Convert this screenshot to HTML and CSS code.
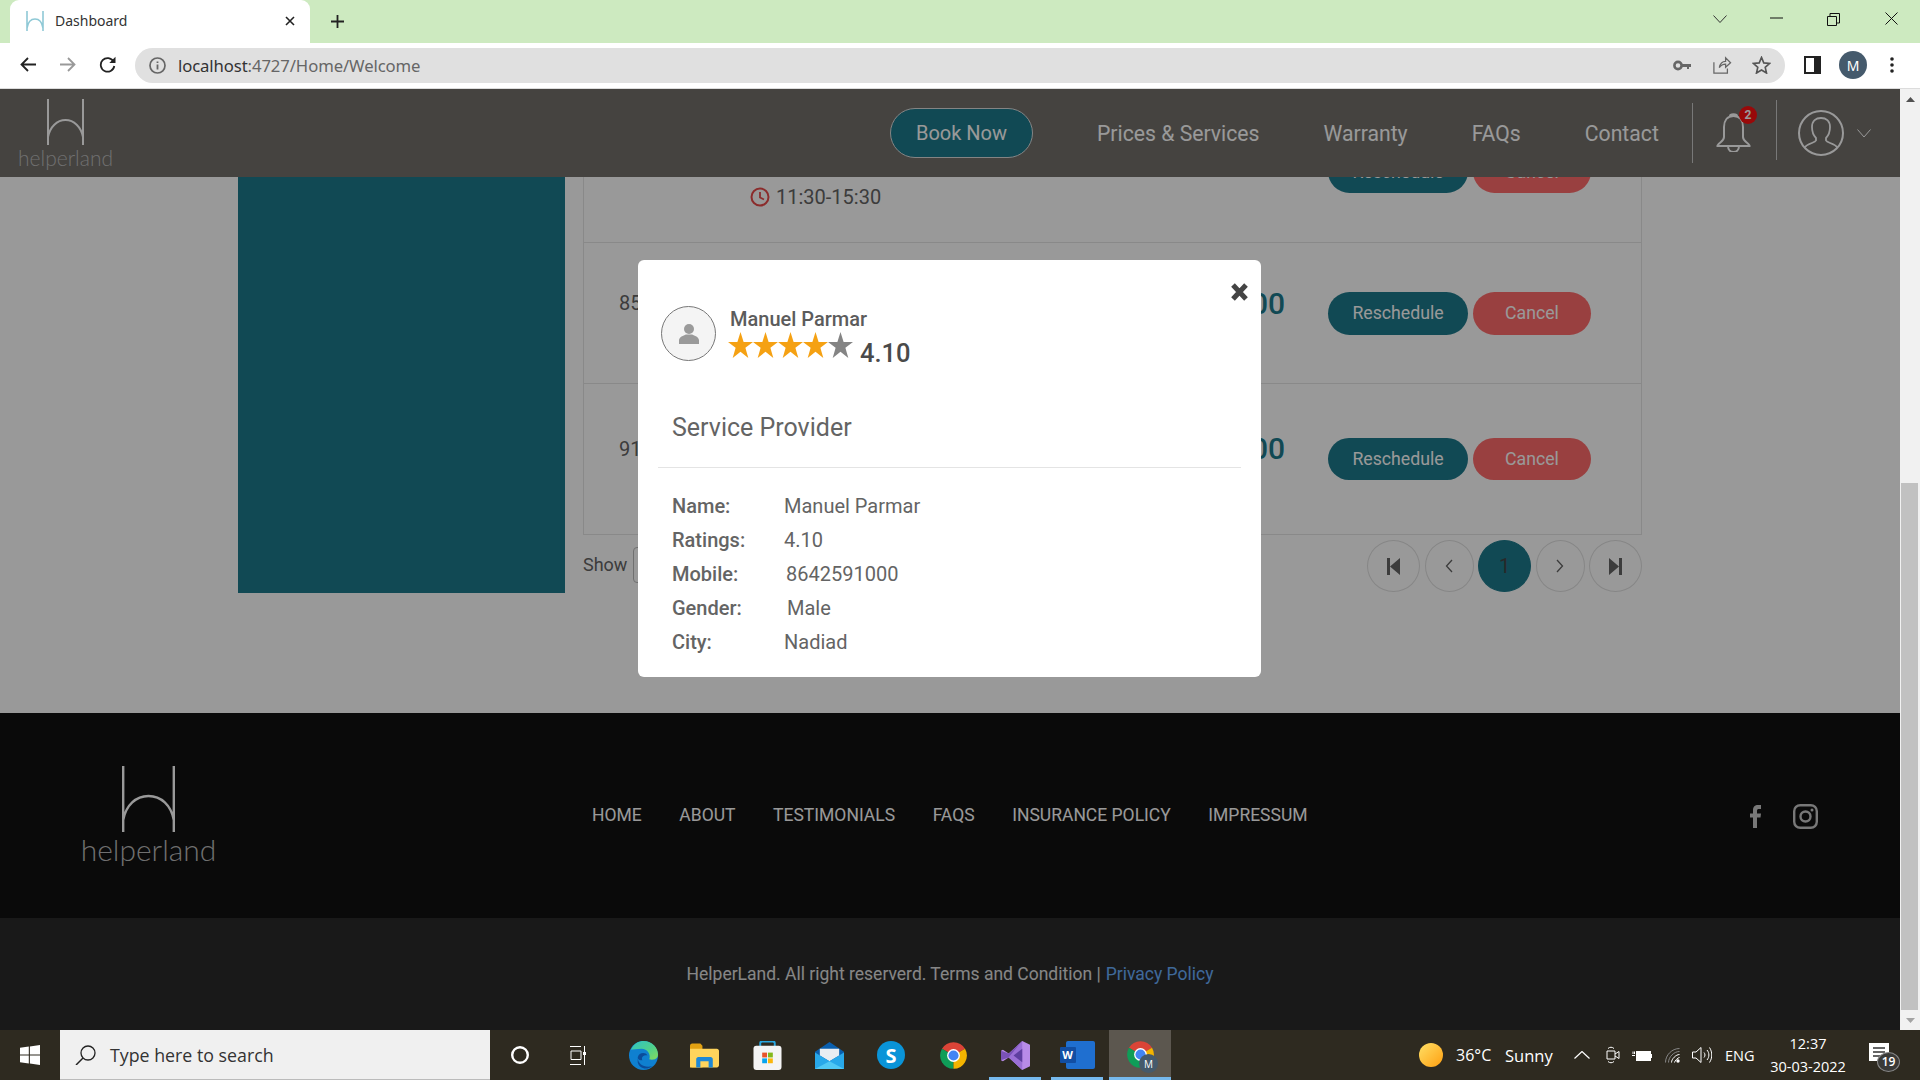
FILE: index.html
```html
<!DOCTYPE html>
<html lang="en">
<head>
<meta charset="utf-8">
<title>Dashboard</title>
<link rel="stylesheet" href="styles.css">
</head>
<body>
<div class="screen">
  <div class="tabstrip">
    <div class="tab">
      <svg class="favicon" viewBox="0 0 18 20"><path d="M1 0V20M17 0V20M1 17C2 11 5 8 9 8S16 11 17 17" fill="none" stroke="#8fc9d6" stroke-width="1.6"/></svg>
      <span class="tab-title">Dashboard</span>
      <svg class="tab-close" viewBox="0 0 10 10"><path d="M1 1L9 9M9 1L1 9" stroke="#222" stroke-width="1.6"/></svg>
    </div>
    <svg class="new-tab" viewBox="0 0 15 13"><path d="M7.5 0V13M1 6.5H14" stroke="#222" stroke-width="1.8"/></svg>
    <svg class="win-chevron" viewBox="0 0 14 8"><path d="M.5 .5L7 7.5L13.5 .5" fill="none" stroke="#333"/></svg>
    <svg class="win-min" viewBox="0 0 13 2"><path d="M0 1H13" stroke="#111"/></svg>
    <svg class="win-restore" viewBox="0 0 13 13"><path d="M.5 3.5H9.5V12.5H.5ZM3 3.5V.5H12.5V10H9.5" fill="none" stroke="#111"/></svg>
    <svg class="win-close" viewBox="0 0 13 13"><path d="M.5 .5L12.5 12.5M12.5 .5L.5 12.5" stroke="#111"/></svg>
  </div>

  <div class="toolbar">
    <svg class="tb-back" viewBox="0 0 16 15"><path d="M16 7.5H1.5M8 1L1.5 7.5L8 14" fill="none" stroke="#222" stroke-width="1.8"/></svg>
    <svg class="tb-forward" viewBox="0 0 16 15"><path d="M0 7.5H14.5M8 1L14.5 7.5L8 14" fill="none" stroke="#999" stroke-width="1.8"/></svg>
    <svg class="tb-reload" viewBox="0 0 17 17"><path d="M14.5 5.5A6.8 6.8 0 1 0 15.3 10" fill="none" stroke="#222" stroke-width="1.8"/><path d="M16.5 .8V7H10.3Z" fill="#222"/></svg>
    <div class="omnibox">
      <svg class="omni-info" viewBox="0 0 17 17"><circle cx="8.5" cy="8.5" r="7.5" fill="none" stroke="#666" stroke-width="1.7"/><path d="M8.5 7.5V12.5M8.5 4.5V6" stroke="#666" stroke-width="1.8"/></svg>
      <span class="url"><span class="url-host">localhost</span>:4727/Home/Welcome</span>
      <svg class="omni-key" viewBox="0 0 18 11"><circle cx="5" cy="5.5" r="3.6" fill="none" stroke="#666" stroke-width="2.6"/><path d="M8 4H18V7H16V9H14V7H8Z" fill="#666"/></svg>
      <svg class="omni-share" viewBox="0 0 20 20"><path d="M1 7V19H16V14M7 13C8 8 11 6 14 6V2L19.5 7.5L14 12.5V9C11 9 9 10 7 13Z" fill="none" stroke="#666" stroke-width="1.4"/></svg>
      <svg class="omni-star" viewBox="0 0 20 19"><path d="M10 1.5L12.4 7.3L18.6 7.8L13.9 11.9L15.3 18L10 14.8L4.700 18L6.100 11.900L1.400 7.800L7.600 7.300Z" fill="none" stroke="#555" stroke-width="1.7"/></svg>
    </div>
    <svg class="tb-panel" viewBox="0 0 17 18"><rect width="17" height="18" fill="#222"/><rect x="2" y="2" width="8" height="14" fill="#fff"/></svg>
    <div class="tb-profile">M</div>
    <svg class="tb-dots" viewBox="0 0 4 16"><circle cx="2" cy="2" r="1.800" fill="#222"/><circle cx="2" cy="8" r="1.800" fill="#222"/><circle cx="2" cy="14" r="1.800" fill="#222"/></svg>
  </div>

  <div class="viewport">
    <div class="page">
      <header class="site-header">
        <div class="logo">
          <svg class="logo-mark" viewBox="0 0 37 46"><path d="M1 0V46M36 0V46M1 38C3 28 10 21 18.5 21S34 28 36 38" fill="none" stroke="#fff" stroke-width="2"/></svg>
          <span class="logo-word">helperland</span>
        </div>
        <nav class="site-nav">
          <a class="book-now">Book Now</a>
          <a class="nav-prices">Prices &amp; Services</a>
          <a class="nav-link">Warranty</a>
          <a class="nav-link">FAQs</a>
          <a class="nav-link">Contact</a>
        </nav>
        <span class="divider divider-a"></span>
        <div class="bell">
          <svg class="bell-icon" viewBox="0 0 35 39"><path d="M17.500 3C24 3 27 8 27 14V24C27 28 31 29 33.500 32.500V33H1.500V32.500C4 29 8 28 8 24V14C8 8 11 3 17.500 3ZM14 3C14 .5 21 .5 21 3M12 33C12 41 23 41 23 33" fill="none" stroke="#fff" stroke-width="2"/></svg>
          <span class="bell-badge">2</span>
        </div>
        <span class="divider divider-b"></span>
        <svg class="user-icon" viewBox="0 0 46 46"><circle cx="23" cy="23" r="22" fill="none" stroke="#fff" stroke-width="2"/><path d="M6.500 37.500C10 33 17 33 18 30.500V28C15 25 14 21 14 17C14 11 18 8 23 8S32 11 32 17C32 21 31 25 28 28V30.500C29 33 36 33 39.500 37.500" fill="none" stroke="#fff" stroke-width="1.800"/></svg>
        <svg class="user-chevron" viewBox="0 0 14 9"><path d="M.5 .5L7 8L13.500 .5" fill="none" stroke="#fff"/></svg>
      </header>

      <section class="content">
        <aside class="sidebar"></aside>
        <div class="main">
          <div class="table">
            <div class="row row-first">
              <div class="when">
                <svg class="clock" viewBox="0 0 20 20"><circle cx="10" cy="10" r="8.500" fill="none" stroke="#e84a4a" stroke-width="2"/><path d="M10 5V10.500L14 12.500" fill="none" stroke="#e84a4a" stroke-width="1.800"/></svg>
                <span>11:30-15:30</span>
              </div>
              <div class="actions actions-clipped">
                <a class="btn btn-teal">Reschedule</a>
                <a class="btn btn-red">Cancel</a>
              </div>
            </div>
            <div class="row">
              <span class="cell-id">8523</span>
              <span class="amount">100</span>
              <div class="actions">
                <a class="btn btn-teal">Reschedule</a>
                <a class="btn btn-red">Cancel</a>
              </div>
            </div>
            <div class="row row-last">
              <span class="cell-id">9114</span>
              <span class="amount">100</span>
              <div class="actions">
                <a class="btn btn-teal btn-short">Reschedule</a>
                <a class="btn btn-red btn-short">Cancel</a>
              </div>
            </div>
          </div>
          <div class="table-foot">
            <span class="show">Show</span>
            <span class="select"></span>
            <div class="pager">
              <a class="pg pg-wide"><svg class="pg-end" viewBox="0 0 13 17"><path d="M0 0H3V17H0ZM13 0V17L3 8.500Z" fill="#646464"/></svg></a>
              <a class="pg"><svg class="pg-arrow" viewBox="0 0 8 14"><path d="M7 1L1.500 7L7 13" fill="none" stroke="#646464" stroke-width="1.300"/></svg></a>
              <a class="pg pg-wide pg-active">1</a>
              <a class="pg"><svg class="pg-arrow" viewBox="0 0 8 14"><path d="M1 1L6.500 7L1 13" fill="none" stroke="#646464" stroke-width="1.300"/></svg></a>
              <a class="pg pg-wide"><svg class="pg-end" viewBox="0 0 13 17"><path d="M13 0H10V17H13ZM0 0V17L10 8.500Z" fill="#646464"/></svg></a>
            </div>
          </div>
        </div>
      </section>

      <footer class="footer-main">
        <div class="footer-logo">
          <svg class="footer-mark" viewBox="0 0 53 66"><path d="M1.200 0V66M51.800 0V66M1.200 54C4 39 14 30 26.500 30S49 39 51.800 54" fill="none" stroke="#fff" stroke-width="2.400"/></svg>
          <span class="footer-word">helperland</span>
        </div>
        <nav class="footer-nav">
          <a>HOME</a><a>ABOUT</a><a>TESTIMONIALS</a><a>FAQS</a><a>INSURANCE POLICY</a><a>IMPRESSUM</a>
        </nav>
        <svg class="fb" viewBox="0 0 11 23"><path d="M3 23V12.500H0V8.500H3V5.500C3 1.500 5 0 8 0H11V4H9C7.500 4 7 4.500 7 6V8.500H11L10.500 12.500H7V23Z" fill="#c8c8c8"/></svg>
        <svg class="ig" viewBox="0 0 25 25"><rect x="1.200" y="1.200" width="22.600" height="22.600" rx="6" fill="none" stroke="#c8c8c8" stroke-width="2.400"/><circle cx="12.500" cy="12.500" r="5" fill="none" stroke="#c8c8c8" stroke-width="2.400"/><circle cx="19" cy="6" r="1.500" fill="#c8c8c8"/></svg>
      </footer>
      <div class="footer-bottom">HelperLand. All right reserverd. Terms and Condition | <a class="privacy">Privacy Policy</a></div>

      <div class="backdrop">
        <div class="modal">
          <svg class="modal-close" viewBox="0 0 17 18"><path d="M2 2L15 16M15 2L2 16" stroke="#444" stroke-width="5"/></svg>
          <div class="sp-head">
            <div class="avatar">
              <svg class="avatar-icon" viewBox="0 0 22 24"><circle cx="11" cy="6.500" r="5.500" fill="#9a9a9a"/><path d="M0 23V19C0 15 5 14 7.500 12.500H14.500C17 14 22 15 22 19V23Z" fill="#9a9a9a"/></svg>
            </div>
            <div class="sp-meta">
              <div class="sp-name">Manuel Parmar</div>
              <div class="sp-rating">
                <svg class="star" viewBox="0 0 24 25"><path d="M12 0L15 9.500H24L16.700 15.200L19.500 25L12 19L4.500 25L7.300 15.200L0 9.500H9Z" fill="#f5a113"/></svg>
                <svg class="star" viewBox="0 0 24 25"><path d="M12 0L15 9.500H24L16.700 15.200L19.500 25L12 19L4.500 25L7.300 15.200L0 9.500H9Z" fill="#f5a113"/></svg>
                <svg class="star" viewBox="0 0 24 25"><path d="M12 0L15 9.500H24L16.700 15.200L19.500 25L12 19L4.500 25L7.300 15.200L0 9.500H9Z" fill="#f5a113"/></svg>
                <svg class="star" viewBox="0 0 24 25"><path d="M12 0L15 9.500H24L16.700 15.200L19.500 25L12 19L4.500 25L7.300 15.200L0 9.500H9Z" fill="#f5a113"/></svg>
                <svg class="star" viewBox="0 0 24 25"><path d="M12 0L15 9.500H24L16.700 15.200L19.500 25L12 19L4.500 25L7.300 15.200L0 9.500H9Z" fill="#848484"/></svg>
                <span class="sp-score">4.10</span>
              </div>
            </div>
          </div>
          <h2 class="modal-title">Service Provider</h2>
          <hr class="modal-rule">
          <dl class="details">
            <div class="detail"><dt>Name:</dt><dd>Manuel Parmar</dd></div>
            <div class="detail"><dt>Ratings:</dt><dd>4.10</dd></div>
            <div class="detail"><dt>Mobile:</dt><dd class="dd-mobile">8642591000</dd></div>
            <div class="detail"><dt>Gender:</dt><dd class="dd-gender">Male</dd></div>
            <div class="detail"><dt>City:</dt><dd>Nadiad</dd></div>
          </dl>
        </div>
      </div>
    </div>

    <div class="scrollbar">
      <div class="sb-btn"><svg class="sb-arrow" viewBox="0 0 9 5"><path d="M4.500 0L9 5H0Z" fill="#505050"/></svg></div>
      <div class="sb-thumb"></div>
      <div class="sb-btn"><svg class="sb-arrow" viewBox="0 0 9 5"><path d="M0 0H9L4.500 5Z" fill="#a3a3a3"/></svg></div>
    </div>
  </div>

  <div class="taskbar">
    <div class="start">
      <svg class="start-icon" viewBox="0 0 20 20"><path d="M0 2.800L8.800 1.500V9.400H0ZM9.900 1.400L20 0V9.400H9.900ZM0 10.500H8.800V18.500L0 17.200ZM9.900 10.500H20V20L9.900 18.600Z" fill="#fff"/></svg>
    </div>
    <div class="search">
      <svg class="search-icon" viewBox="0 0 21 20"><circle cx="13" cy="8" r="7" fill="none" stroke="#222" stroke-width="1.300"/><path d="M8 13L1 20" stroke="#222" stroke-width="1.500"/></svg>
      <span class="search-text">Type here to search</span>
    </div>
    <div class="task-cell task-first"><svg class="ti-cortana" viewBox="0 0 18 18"><circle cx="9" cy="9" r="7.800" fill="none" stroke="#fff" stroke-width="2.400"/></svg></div>
    <div class="task-cell"><svg class="ti-view" viewBox="0 0 21 19"><path d="M0 .5H11M0 18.500H11M1 5H11V13.500H1ZM14.500 0V6M14.500 9V19" fill="none" stroke="#fff"/><rect x="13" y="6" width="3" height="3" fill="#fff"/></svg></div>
    <div class="task-cell"><svg class="ti-app" viewBox="0 0 30 30"><defs><linearGradient id="edgeA" x1="0" y1="0" x2="1" y2="1"><stop offset="0" stop-color="#2fc3c7"/><stop offset=".55" stop-color="#4fd08d"/><stop offset="1" stop-color="#86dc5c"/></linearGradient></defs><circle cx="15" cy="15" r="15" fill="#0f80d0"/><path d="M2 9C5 2 11 0 15 0C24 0 30 7 30 14C30 19 25 20 21 19C23 14 19 8 13 8C8 8 4 9 2 9Z" fill="url(#edgeA)"/><path d="M9 17C9 24 16 28 24 26C18 31 10 28 9 22ZM9 17C10 12 17 11 19 15C15 14 12 17 14 20C11 20 9 19 9 17Z" fill="#0b4c9a"/></svg></div>
    <div class="task-cell"><svg class="ti-app ti-folder" viewBox="0 0 28 23"><path d="M0 2C0 1 1 0 2 0H10L12 2V23H2C1 23 0 22 0 21Z" fill="#e2a112"/><path d="M0 5H26C27 5 28 6 28 7V21C28 22 27 23 26 23H0Z" fill="#ffd45c"/><path d="M6 23V15C6 14 7 13 8 13H20C21 13 22 14 22 15V23H18V17H10V23Z" fill="#1e88d6"/></svg></div>
    <div class="task-cell"><svg class="ti-app" viewBox="0 0 29 30"><path d="M7 6V2C7 1 8 .5 9 .5H20C21 .5 22 1 22 2V6" fill="none" stroke="#29a7e1" stroke-width="2"/><rect y="5" width="29" height="25" rx="3" fill="#f4f4f4"/><rect x="9" y="12" width="5" height="5" fill="#e8532b"/><rect x="15" y="12" width="5" height="5" fill="#83b81a"/><rect x="9" y="18" width="5" height="5" fill="#06a5ef"/><rect x="15" y="18" width="5" height="5" fill="#fbb60b"/></svg></div>
    <div class="task-cell"><svg class="ti-app" viewBox="0 0 30 28"><path d="M15 0L30 10V28H0V10Z" fill="#0a5fae"/><path d="M5 7H25V14L15 20L5 14Z" fill="#e9edf2"/><path d="M0 11L15 20L30 11V28H0Z" fill="#28a8ea"/><path d="M0 28L15 20L30 28Z" fill="#50c8f5"/></svg></div>
    <div class="task-cell"><div class="ti-skype">S</div></div>
    <div class="task-cell"><svg class="ti-app" viewBox="0 0 24 24"><path d="M12 12L2.470 6.500A11 11 0 0 1 21.530 6.500Z" fill="#db4437"/><path d="M12 12L2.470 6.500A11 11 0 0 0 12 23Z" fill="#0f9d58"/><path d="M12 12L21.530 6.500A11 11 0 0 1 12 23Z" fill="#f4b400"/><circle cx="12" cy="12" r="5.300" fill="#fff"/><circle cx="12" cy="12" r="4.200" fill="#4285f4"/></svg></div>
    <div class="task-cell task-open"><svg class="ti-app" viewBox="0 0 30 30"><path d="M22 0L30 4V26L22 30L8 17L2 21L0 20V10L2 9L8 13Z" fill="#b88be8"/><path d="M22 0V30L8 17Z" fill="#9b6fd6"/><path d="M0 10L8 13L22 0L8 17L0 20Z" fill="#7a52b8"/><path d="M22 8V22L13 15Z" fill="#5f3fa0"/></svg></div>
    <div class="task-cell task-open"><div class="ti-word"><span class="ti-word-badge">W</span></div></div>
    <div class="task-cell task-open task-active">
      <div class="ti-chrome-wrap">
        <svg class="ti-app" viewBox="0 0 24 24"><path d="M12 12L2.470 6.500A11 11 0 0 1 21.530 6.500Z" fill="#db4437"/><path d="M12 12L2.470 6.500A11 11 0 0 0 12 23Z" fill="#0f9d58"/><path d="M12 12L21.530 6.500A11 11 0 0 1 12 23Z" fill="#f4b400"/><circle cx="12" cy="12" r="5.300" fill="#fff"/><circle cx="12" cy="12" r="4.200" fill="#4285f4"/></svg>
        <span class="ti-chrome-badge">M</span>
      </div>
    </div>
    <div class="tray">
      <div class="sun"></div>
      <span class="tray-temp">36°C</span>
      <span class="tray-sunny">Sunny</span>
      <svg class="tr-chevron" viewBox="0 0 16 8"><path d="M.5 7.500L8 .5L15.500 7.500" fill="none" stroke="#fff" stroke-width="1.200"/></svg>
      <svg class="tr-cam" viewBox="0 0 14 18"><path d="M1 5V13H9V5ZM9 8L13 5.500V12.500L9 10M2 2.500C4 .8 6 .8 8 2.500M2 15.500C4 17.200 6 17.200 8 15.500" fill="none" stroke="#fff"/></svg>
      <svg class="tr-battery" viewBox="0 0 20 13"><path d="M0 6.500H3M1 2.500V5M2.500 2.500V5" stroke="#fff"/><rect x="4.500" y="2.500" width="14" height="9" fill="#fff" stroke="#fff"/><rect x="19" y="5" width="1" height="4" fill="#fff"/></svg>
      <svg class="tr-wifi" viewBox="0 0 15 15"><path d="M.5 14.500C.5 7 7 .5 14.500 .5" fill="none" stroke="#888"/><path d="M3.500 14.500C3.500 9 9 3.500 14.500 3.500" fill="none" stroke="#888"/><path d="M6.500 14.500C6.500 11 11 6.500 14.500 6.500M9.500 14.500C9.500 13 13 9.500 14.500 9.500" fill="none" stroke="#fff"/><circle cx="13" cy="13" r="1.700" fill="#fff"/></svg>
      <svg class="tr-speaker" viewBox="0 0 20 18"><path d="M.5 6V12H4L9 16.500V1.500L4 6ZM12 6.500C13.300 8 13.300 10 12 11.500M15 4C17.500 7 17.500 11 15 14M17.500 1.500C20.500 6 20.500 12 17.500 16.500" fill="none" stroke="#fff"/></svg>
      <span class="tray-eng">ENG</span>
      <div class="tray-clock"><span>12:37</span><span>30-03-2022</span></div>
      <div class="notif">
        <svg class="notif-icon" viewBox="0 0 20 18"><rect width="20" height="18" fill="#fff"/><path d="M4 5H16M4 9H16M4 13H16" stroke="#333" stroke-width="1.300"/></svg>
        <span class="notif-badge">19</span>
      </div>
    </div>
  </div>
</div>
</body>
</html>
```

FILE: styles.css
```css
* { box-sizing: border-box; }
html, body { margin: 0; padding: 0; height: 100%; overflow: hidden; background: #fff; }
a { color: inherit; text-decoration: none; }
svg { display: block; flex: none; }

.screen {
  width: 1920px; height: 1080px; display: flex; flex-direction: column;
  font-family: Roboto, "Liberation Sans", sans-serif; color: #646464;
}

/* Browser tab strip */
.tabstrip { height: 43px; flex: none; background: #cdeac0; display: flex; align-items: flex-start; padding-left: 10px; }
.tab { width: 300px; height: 43px; background: #fff; border-radius: 9px 9px 0 0; display: flex; align-items: center; padding: 0 15px 2px 16px; }
.favicon { width: 18px; height: 20px; }
.tab-title { margin-left: 11px; font: 14px "Noto Sans", sans-serif; color: #333; }
.tab-close { width: 10px; height: 10px; margin-left: auto; }
.new-tab { width: 15px; height: 13px; margin: 15px 0 0 20px; }
.win-chevron { width: 14px; height: 8px; margin: 15px 0 0 1368px; }
.win-min { width: 13px; height: 2px; margin: 17px 0 0 43px; }
.win-restore { width: 13px; height: 13px; margin: 13px 0 0 44px; }
.win-close { width: 13px; height: 13px; margin: 12px 0 0 45px; }

/* Browser toolbar */
.toolbar { height: 46px; flex: none; background: #fff; border-bottom: 1px solid #dcdcdc; display: flex; align-items: center; padding: 0 0 1px 20px; }
.tb-back, .tb-forward { width: 16px; height: 15px; margin-top: -2px; }
.tb-forward { margin-left: 24px; }
.tb-reload { width: 17px; height: 17px; margin: -2px 0 0 23px; }
.omnibox { width: 1650px; height: 35px; margin-left: 19px; background: #e0e0e0; border-radius: 18px; display: flex; align-items: center; padding-left: 14px; }
.omni-info { width: 17px; height: 17px; }
.url { margin-left: 12px; font: 16.7px "Noto Sans", sans-serif; color: #666; letter-spacing: -.1px; }
.url-host { color: #333; }
.omni-key { width: 18px; height: 11px; margin-left: auto; }
.omni-share { width: 20px; height: 18px; margin-left: 21px; }
.omni-star { width: 19px; height: 18px; margin: 0 14px 0 20px; }
.tb-panel { width: 17px; height: 18px; margin-left: 19px; }
.tb-profile { width: 28px; height: 28px; margin-left: 18px; border-radius: 50%; background: #455a6c; color: #fff; font: 14px "Noto Sans", sans-serif; display: flex; align-items: center; justify-content: center; flex: none; }
.tb-dots { width: 4px; height: 16px; margin-left: 23px; }

/* Page */
.viewport { flex: 1; display: flex; min-height: 0; }
.page { position: relative; width: 1900px; height: 941px; flex: none; background: #fff; display: flex; flex-direction: column; overflow: hidden; }

.site-header { height: 88px; flex: none; background: #73706c; display: flex; align-items: center; position: relative; z-index: 1; padding-left: 20px; color: #fff; }
.logo { width: 91px; height: 78px; flex: none; display: flex; flex-direction: column; align-items: center; margin-top: 10px; }
.logo-mark { width: 37px; height: 46px; }
.logo-word { font: 300 21px/1 Lato, sans-serif; margin-top: 2px; color: #bbb; }
.site-nav { display: flex; align-items: center; margin-left: 779px; font-size: 21.2px; }
.book-now { width: 143px; height: 50px; background: #1d7a8c; border: 1px solid #ddd; border-radius: 25px; display: flex; align-items: center; justify-content: center; font-size: 20px; }
.nav-prices { margin-left: 64px; }
.nav-link { margin-left: 64px; }
.divider { width: 1px; background: #c8c8c8; flex: none; }
.divider-a { height: 60px; margin-left: 33px; }
.bell { position: relative; width: 40px; height: 40px; margin-left: 22px; flex: none; }
.bell-icon { width: 35px; height: 39px; margin-left: 1px; }
.bell-badge { position: absolute; left: 24px; top: -7px; width: 18px; height: 18px; border-radius: 50%; background: #ff1010; font-size: 12px; font-weight: 700; display: flex; align-items: center; justify-content: center; }
.divider-b { height: 60px; margin-left: 21px; margin-top: -6px; }
.user-icon { width: 46px; height: 46px; margin-left: 21px; }
.user-chevron { width: 14px; height: 9px; margin-left: 13px; }

.content { height: 536px; flex: none; display: flex; align-items: flex-start; padding-left: 238px; overflow: hidden; }
.sidebar { width: 327px; height: 416px; flex: none; background: #1d7a8c; }
.main { width: 1059px; margin-left: 18px; flex: none; }
.table { border: 1px solid #e4e4e4; border-top: 0; font-size: 20px; }
.row { height: 141px; display: flex; align-items: center; border-top: 1px solid #e4e4e4; }
.row-first { height: 65px; border-top: 0; align-items: flex-start; }
.row-last { height: 151px; }
.row-last .amount { margin-top: -22px; }
.when { display: flex; align-items: center; margin: 8px 0 0 166px; font-size: 20px; }
.clock { width: 20px; height: 20px; margin-right: 6px; }
.cell-id { margin: -20px 0 0 35px; }
.amount { margin: -20px 0 0 auto; font-size: 30px; font-weight: 500; color: #1d7a8c; }
.actions { width: 263px; margin: 0 50px 0 43px; display: flex; gap: 5px; flex: none; font-size: 17.7px; color: #fff; }
.row-first .actions { margin-left: auto; }
.actions-clipped { margin-top: -27px; }
.btn { height: 43px; border-radius: 22px; display: flex; align-items: center; justify-content: center; }
.btn-short { height: 42px; }
.btn-teal { width: 140px; background: #1d7a8c; }
.btn-red { width: 118px; background: #ff6b6b; }
.table-foot { display: flex; align-items: center; margin-top: 5px; font-size: 18px; }
.show { margin-top: -4px; }
.select { width: 70px; height: 36px; margin: -2px 0 0 6px; border: 1px solid #bbb; border-radius: 4px; flex: none; }
.pager { display: flex; gap: 4.5px; margin-left: auto; }
.pg { width: 49px; height: 52px; border: 1px solid #e0e0e0; border-radius: 50%; display: flex; align-items: center; justify-content: center; font-size: 20px; }
.pg-wide { width: 53px; }
.pg-active { background: #1d7a8c; border-color: #1d7a8c; color: #444; }
.pg-end { width: 13px; height: 17px; }
.pg-arrow { width: 8px; height: 14px; }

.footer-main { height: 205px; flex: none; background: #111; display: flex; align-items: flex-start; padding-left: 82px; color: #fff; }
.footer-logo { width: 133px; flex: none; display: flex; flex-direction: column; align-items: center; margin-top: 53px; }
.footer-mark { width: 53px; height: 66px; }
.footer-word { font: 300 30px/1 Lato, sans-serif; margin-top: 2px; color: #bbb; }
.footer-nav { display: flex; gap: 37.6px; margin: 91px 0 0 377px; font-size: 17.5px; line-height: 22px; }
.fb { width: 11px; height: 23px; margin: 92px 0 0 442px; }
.ig { width: 25px; height: 25px; margin: 91px 0 0 32px; }
.footer-bottom { height: 112px; flex: none; background: #2b2b2b; color: #e0e0e0; font-size: 17.5px; display: flex; align-items: center; justify-content: center; gap: 5px; }
.privacy { color: #6ab0ff; }

/* Modal */
.backdrop { position: absolute; inset: 0; z-index: 2; background: rgba(0, 0, 0, .4); display: flex; justify-content: center; align-items: flex-start; padding: 171px 1px 0 0; }
.modal { position: relative; width: 623px; height: 417px; background: #fff; border-radius: 6px; flex: none; padding: 46px 0 0; }
.modal-close { position: absolute; top: 23px; right: 13px; width: 17px; height: 18px; }
.sp-head { display: flex; padding-left: 23px; }
.avatar { width: 55px; height: 55px; border-radius: 50%; border: 1px solid #777; background: #f4f4f4; display: flex; align-items: center; justify-content: center; flex: none; }
.avatar-icon { width: 20px; height: 24px; }
.sp-meta { margin-left: 14px; }
.sp-name { font-size: 20px; line-height: 26px; font-weight: 500; color: #5c5c5c; }
.sp-rating { display: flex; align-items: flex-start; margin: 0 0 0 -2px; }
.star { width: 25px; height: 26px; }
.sp-score { margin: 6px 0 0 7px; font-size: 25.5px; line-height: 30px; font-weight: 500; color: #4a4a4a; }
.modal-title { margin: 45px 0 0 34px; font-size: 25px; line-height: 30px; font-weight: 400; color: #646464; }
.modal-rule { margin: 24px 20px 0; border: 0; border-top: 1px solid #e4e4e4; }
.details { margin: 21px 0 0 34px; font-size: 20px; color: #646464; }
.detail { display: flex; height: 34px; align-items: center; }
.detail:last-child { height: 33px; }
.details dt { width: 112px; font-weight: 500; }
.details dd { margin: 0; }
.dd-mobile { padding-left: 2px; }
.dd-gender { padding-left: 3px; }

/* Scrollbar */
.scrollbar { width: 20px; flex: none; background: #f1f1f1; display: flex; flex-direction: column; }
.sb-btn { height: 20px; flex: none; display: flex; align-items: center; justify-content: center; }
.sb-arrow { width: 9px; height: 5px; }
.sb-thumb { height: 527px; width: 17px; margin: 374px 0 0 1px; background: #c1c1c1; flex: none; }

/* Taskbar */
.taskbar { height: 50px; flex: none; background: #2e2a20; display: flex; align-items: stretch; color: #fff; font-family: "Open Sans", sans-serif; }
.start { width: 60px; flex: none; display: flex; align-items: center; padding-left: 20px; }
.start-icon { width: 20px; height: 20px; }
.search { width: 430px; flex: none; background: #f0f0f0; border-bottom: 1px solid #bbb; display: flex; align-items: center; padding-left: 15px; color: #333; }
.search-icon { width: 21px; height: 20px; }
.search-text { margin-left: 14px; font-size: 17.8px; }
.task-cell { width: 62px; flex: none; display: flex; align-items: center; justify-content: center; position: relative; }
.task-first { width: 60px; }
.task-open::after { content: ""; position: absolute; left: 5px; right: 5px; bottom: 0; height: 3px; background: #76b9ed; }
.task-active { background: #5c574f; margin-left: 1px; }
.task-active::after { left: 0; right: 0; }
.ti-cortana { width: 18px; height: 18px; }
.ti-view { width: 21px; height: 19px; margin-left: -1px; }
.ti-app { width: 29px; height: 29px; }
.ti-folder { margin-left: -1px; }
.ti-skype { width: 28px; height: 28px; border-radius: 50%; background: #0a94d8; color: #fff; font: 700 20px "Open Sans", sans-serif; display: flex; align-items: center; justify-content: center; }
.ti-word { position: relative; width: 29px; height: 28px; background: #1f6fd0; border-radius: 2px; margin-left: 6px; }
.ti-word-badge { position: absolute; left: -6px; top: 6px; width: 16px; height: 16px; background: #124ea3; font: 700 11px/16px "Open Sans", sans-serif; text-align: center; border-radius: 1px; }
.ti-chrome-wrap { position: relative; width: 30px; height: 30px; margin-left: 2px; }
.ti-chrome-badge { position: absolute; right: -2px; bottom: -3px; width: 19px; height: 19px; border-radius: 50%; background: #455a6c; font-size: 10px; display: flex; align-items: center; justify-content: center; }
.tray { display: flex; align-items: center; flex: none; margin-left: 248px; font-size: 16px; }
.sun { width: 24px; height: 24px; border-radius: 50%; background: linear-gradient(135deg, #ffe066, #ff9f10); flex: none; }
.tray-temp { width: 37px; margin-left: 13px; flex: none; white-space: nowrap; }
.tray-sunny { width: 47px; margin-left: 12px; flex: none; font-size: 16.5px; }
.tr-chevron { width: 16px; height: 8px; margin-left: 22px; }
.tr-cam { width: 14px; height: 18px; margin-left: 16px; }
.tr-battery { width: 20px; height: 13px; margin-left: 12px; }
.tr-wifi { width: 15px; height: 15px; margin-left: 13px; }
.tr-speaker { width: 20px; height: 18px; margin-left: 12px; }
.tray-eng { width: 29px; margin-left: 13px; font-size: 14.5px; flex: none; }
.tray-clock { width: 76px; margin-left: 16px; flex: none; display: flex; flex-direction: column; align-items: center; font-size: 14.5px; line-height: 23px; white-space: nowrap; }
.notif { position: relative; width: 20px; height: 18px; margin: -7px 0 0 23px; flex: none; }
.notif-icon { width: 20px; height: 18px; }
.notif-badge { position: absolute; left: 8px; top: 9px; width: 23px; height: 20px; border-radius: 50%; background: #3a3a38; border: 1px solid #888; font-size: 12px; font-weight: 600; display: flex; align-items: center; justify-content: center; }
```
